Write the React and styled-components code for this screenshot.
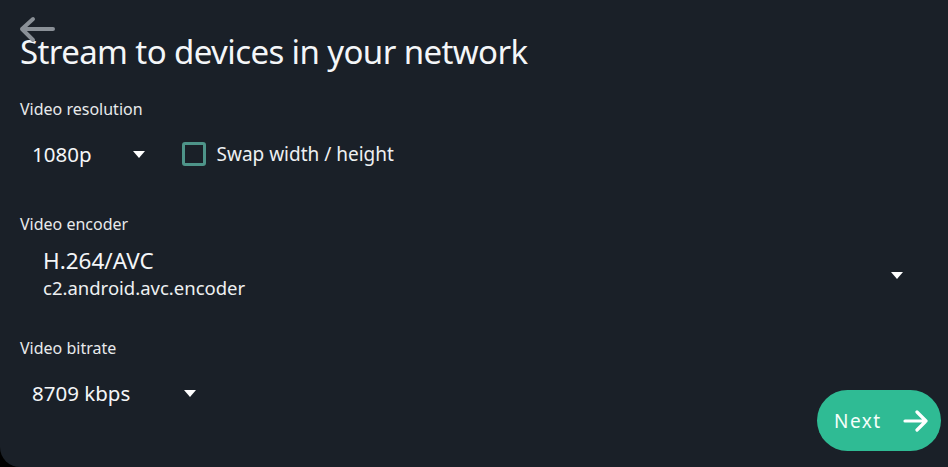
import React from "react";
import styled, { createGlobalStyle } from "styled-components";

const Global = createGlobalStyle`
  html, body { margin: 0; padding: 0; background: #000; }
  body { font-family: "Noto Sans", "Open Sans", sans-serif; }
  * { box-sizing: border-box; }
`;

const Panel = styled.div`
  position: relative;
  width: 948px;
  height: 467px;
  background: #1a2028;
  border-bottom-left-radius: 20px;
  padding: 32px 20px 0 20px;
  color: #f2f4f6;
  overflow: hidden;
`;

const BackButton = styled.button`
  position: absolute;
  left: 17px;
  top: 16px;
  width: 40px;
  height: 30px;
  padding: 0;
  border: none;
  background: transparent;
  display: flex;
  align-items: center;
  justify-content: flex-start;
`;

const Title = styled.h1`
  margin: 0;
  font-size: 33px;
  font-weight: 400;
  line-height: 40px;
  letter-spacing: -0.6px;
  color: #f4f6f8;
`;

const Section = styled.section`
  display: flex;
  flex-direction: column;
  margin-top: ${(p) => p.$top}px;
`;

const Label = styled.div`
  font-size: 16px;
  line-height: 20px;
  color: #e8eaec;
`;

const Row = styled.div`
  display: flex;
  align-items: center;
  gap: 37px;
  margin-top: ${(p) => p.$top || 0}px;
`;

const Select = styled.div`
  display: flex;
  align-items: center;
  justify-content: ${(p) => (p.$full ? "space-between" : "flex-start")};
  gap: ${(p) => p.$gap || 48}px;
  flex: ${(p) => (p.$full ? 1 : "none")};
  padding-left: ${(p) => p.$pad || 12}px;
  padding-right: ${(p) => (p.$full ? 25 : 0)}px;
`;

const Value = styled.span`
  font-size: ${(p) => p.$size || 20.5}px;
  line-height: 26px;
  color: #f4f6f8;
`;

const Stack = styled.div`
  display: flex;
  flex-direction: column;
`;

const SubValue = styled.span`
  font-size: 18.5px;
  line-height: 28px;
  color: #eef0f2;
`;

const Caret = styled.span`
  width: 0;
  height: 0;
  border-left: 6.5px solid transparent;
  border-right: 6.5px solid transparent;
  border-top: 7px solid #ffffff;
`;

const Check = styled.label`
  display: flex;
  align-items: center;
  gap: 11px;
  font-size: 19px;
  color: #eef0f2;
`;

const Box = styled.span`
  width: 24px;
  height: 24px;
  border: 3px solid #4e9489;
  border-radius: 3px;
`;

const NextButton = styled.button`
  position: absolute;
  right: 7px;
  bottom: 16px;
  width: 124px;
  height: 61px;
  border: none;
  border-radius: 31px;
  background: #2fbb94;
  color: #f6fffb;
  font-family: "Noto Sans", "Open Sans", sans-serif;
  font-size: 19px;
  letter-spacing: 1.5px;
  display: flex;
  align-items: center;
  justify-content: space-between;
  padding: 1px 12px 0 17px;
`;

export default function App() {
  return (
    <>
      <Global />
      <Panel>
        <BackButton aria-label="Back">
          <svg width="40" height="30" viewBox="0 0 40 30">
            <path
              d="M36 13 H5 M16 3 L5 13 L16 24"
              fill="none"
              stroke="#8a9097"
              strokeWidth="4"
              strokeLinecap="round"
              strokeLinejoin="round"
            />
          </svg>
        </BackButton>
        <Title>Stream to devices in your network</Title>

        <Section $top={27}>
          <Label>Video resolution</Label>
          <Row $top={22}>
            <Select $gap={41}>
              <Value>1080p</Value>
              <Caret />
            </Select>
            <Check>
              <Box />
              Swap width / height
            </Check>
          </Row>
        </Section>

        <Section $top={47}>
          <Label>Video encoder</Label>
          <Row $top={14}>
            <Select $full $pad={23}>
              <Stack>
                <Value $size={22.5}>H.264/AVC</Value>
                <SubValue>c2.android.avc.encoder</SubValue>
              </Stack>
              <Caret />
            </Select>
          </Row>
        </Section>

        <Section $top={36}>
          <Label>Video bitrate</Label>
          <Row $top={22}>
            <Select $gap={54}>
              <Value>8709 kbps</Value>
              <Caret />
            </Select>
          </Row>
        </Section>

        <NextButton>
          Next
          <svg width="26" height="22" viewBox="0 0 26 22">
            <path
              d="M2 11 H23 M14 2 L23 11 L14 20"
              fill="none"
              stroke="#ffffff"
              strokeWidth="3.2"
              strokeLinecap="round"
              strokeLinejoin="round"
            />
          </svg>
        </NextButton>
      </Panel>
    </>
  );
}
